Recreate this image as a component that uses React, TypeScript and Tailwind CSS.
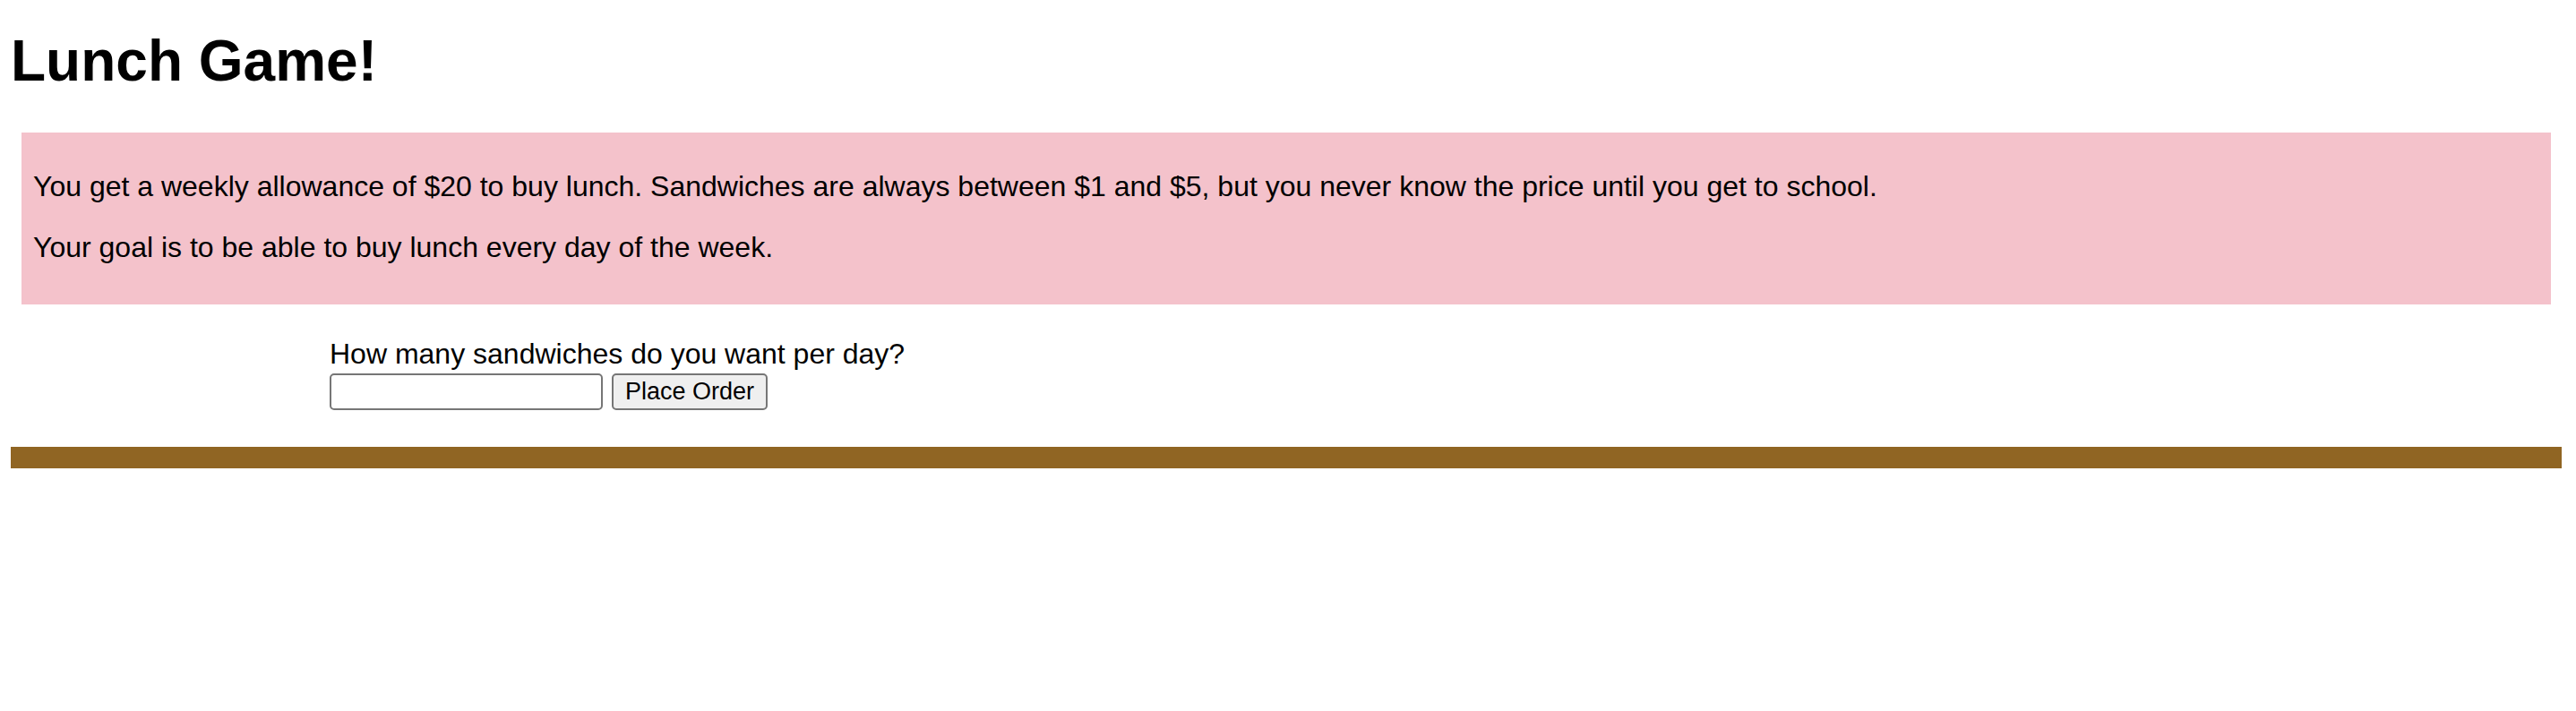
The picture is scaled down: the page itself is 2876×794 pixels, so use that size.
import React from 'react';

const App: React.FC = () => (
  <div className="min-h-[794px] bg-white pl-[12px] pr-[16px] pt-[31px] text-black font-['Liberation_Sans',Arial,sans-serif]">
    <h1 className="text-[64px] font-bold leading-[74px]">Lunch Game!</h1>

    <div className="mx-[12px] mt-[43px] bg-[#f4c2cb] pl-[13px] pr-[13px] pt-[42px] pb-[45px] text-[32px] leading-[37px]">
      <p>
        You get a weekly allowance of $20 to buy lunch. Sandwiches are always between $1 and $5, but you
        never know the price until you get to school.
      </p>
      <p className="mt-[31px]">Your goal is to be able to buy lunch every day of the week.</p>
    </div>

    <form className="ml-[12.5%] mt-[37px]" onSubmit={e => e.preventDefault()}>
      <label htmlFor="sandwiches" className="block text-[32px] leading-[37px]">
        How many sandwiches do you want per day?
      </label>
      <div className="mt-[3px] flex items-center gap-[10px]">
        <input
          id="sandwiches"
          type="text"
          className="h-[41px] w-[305px] rounded-[5px] border-2 border-[#767676] bg-white px-[4px] text-[26px] outline-none"
        />
        <button
          type="submit"
          className="h-[41px] w-[174px] rounded-[5px] border-2 border-[#767676] bg-[#efefef] text-[27px] leading-none"
        >
          Place Order
        </button>
      </div>
    </form>

    <div className="mt-[41px] h-[24px] bg-[#906523]" />
  </div>
);

export default App;
